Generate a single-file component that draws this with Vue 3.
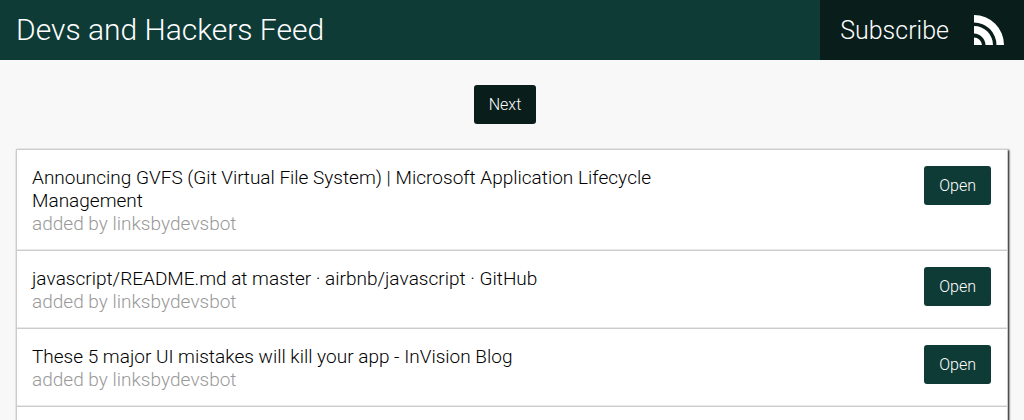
<script setup>
const links = [
  'Announcing GVFS (Git Virtual File System) | Microsoft Application Lifecycle Management',
  'javascript/README.md at master · airbnb/javascript · GitHub',
  'These 5 major UI mistakes will kill your app - InVision Blog',
  ''
]
</script>

<template>
  <div class="page">
    <header class="bar">
      <h1 class="title">Devs and Hackers Feed</h1>
      <a class="subscribe" href="#">
        <span>Subscribe</span>
        <svg class="rss" viewBox="0 0 30 30" aria-hidden="true">
          <path d="M0 22.5V30h8A8 8 0 0 0 0 22.5z" />
          <path d="M0 11v7.500A12 12 0 0 1 11.500 30H19A19 19 0 0 0 0 11z" />
          <path d="M0 0v7.500A22.500 22.500 0 0 1 22.500 30H30A30 30 0 0 0 0 0z" />
        </svg>
      </a>
    </header>
    <main class="content">
      <nav class="pager"><button class="btn next" type="button">Next</button></nav>
      <ul class="list">
        <li v-for="(link, i) in links" :key="i" class="item">
          <div class="text">
            <h2 class="name">{{ link }}</h2>
            <p v-if="link" class="by">added by linksbydevsbot</p>
          </div>
          <button v-if="link" class="btn" type="button">Open</button>
        </li>
      </ul>
    </main>
  </div>
</template>

<style>
html { height: 100%; overflow: hidden; }
body { margin: 0; height: 100%; overflow: hidden; background: #f8f8f8; }
</style>

<style scoped>
.page {
  font-family: Roboto, sans-serif;
  font-weight: 300;
  color: #000;
}
.bar {
  display: flex;
  justify-content: space-between;
  height: 60px;
  background: #0f3b37;
  color: #fff;
}
.title {
  margin: 0;
  padding-left: 16px;
  font-size: 30px;
  font-weight: 300;
  line-height: 60px;
}
.subscribe {
  display: flex;
  align-items: center;
  gap: 25px;
  padding: 0 20px;
  background: #091d1b;
  color: #fff;
  font-size: 25px;
  text-decoration: none;
}
.rss { width: 30px; height: 30px; fill: #fff; }
.content { padding: 25px 16px 0; }
.pager { display: flex; justify-content: center; padding-right: 14px; }
.btn {
  flex: none;
  height: 39px;
  padding: 0 15px;
  border: 0;
  border-radius: 3px;
  background: #0f3b37;
  color: #fff;
  font: 300 16px Roboto, sans-serif;
}
.next { background: #091d1b; }
.list {
  margin: 25px 0 0;
  padding: 0;
  list-style: none;
  border: 1px solid #ccc;
  background: #fff;
  box-shadow: 1px 1px 2px #000;
}
.item {
  display: flex;
  justify-content: space-between;
  align-items: flex-start;
  padding: 16px 16px 15px 15px;
  border-bottom: 1px solid #ccc;
  box-shadow: inset 0 -1px #e9e9e9;
}
.text { width: 70%; }
.name, .by {
  margin: 0;
  font-size: 19px;
  font-weight: 300;
  font-kerning: none;
  line-height: 23px;
}
.by { color: #999; }
</style>
